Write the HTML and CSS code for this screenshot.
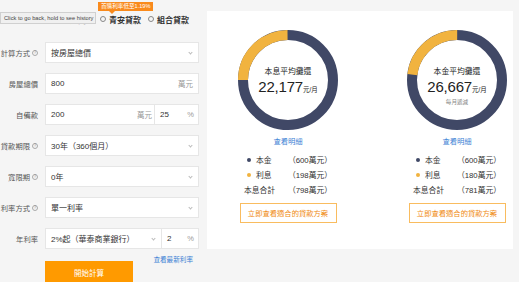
FILE: index.html
```html
<!DOCTYPE html>
<html lang="zh-Hant">
<head>
<meta charset="utf-8">
<link rel="stylesheet" href="styles.css">
</head>
<body>
<div class="page">
  <div class="form">
    <div class="radio-row">
      <div class="label">貸款類型 <span class="q">?</span></div>
      <div class="radios">
        <span class="radio checked"><i></i>一般房貸</span>
        <span class="radio promo"><i></i>青安貸款<span class="badge">首購利率低至1.19%</span></span>
        <span class="radio"><i></i>組合貸款</span>
      </div>
    </div>

    <div class="row">
      <div class="label">計算方式 <span class="q">?</span></div>
      <div class="field select"><span class="val">按房屋總價</span><span class="arrow"></span></div>
    </div>
    <div class="row">
      <div class="label">房屋總價</div>
      <div class="field"><span class="val">800</span><span class="unit">萬元</span></div>
    </div>
    <div class="row">
      <div class="label">自備款</div>
      <div class="field split">
        <div class="part main"><span class="val">200</span><span class="unit">萬元</span></div>
        <div class="part pct"><span class="val">25</span><span class="unit">%</span></div>
      </div>
    </div>
    <div class="row">
      <div class="label">貸款期限 <span class="q">?</span></div>
      <div class="field select"><span class="val">30年（360個月）</span><span class="arrow"></span></div>
    </div>
    <div class="row">
      <div class="label">寬限期 <span class="q">?</span></div>
      <div class="field select"><span class="val">0年</span><span class="arrow"></span></div>
    </div>
    <div class="row">
      <div class="label">利率方式 <span class="q">?</span></div>
      <div class="field select"><span class="val">單一利率</span><span class="arrow"></span></div>
    </div>
    <div class="row">
      <div class="label">年利率</div>
      <div class="field split">
        <div class="part main rate"><span class="val">2%起（華泰商業銀行）</span><span class="arrow"></span></div>
        <div class="part pct"><span class="val">2</span><span class="unit">%</span></div>
      </div>
    </div>
    <div class="link-row"><a class="link">查看最新利率</a></div>
    <div class="btn-row"><button class="calc">開始計算</button></div>
  </div>

  <div class="card">
    <div class="col">
      <div class="donut">
        <svg width="100" height="100" viewBox="0 0 100 100">
          <circle cx="50" cy="50" r="45" fill="none" stroke="#404866" stroke-width="10"/>
          <circle cx="50" cy="50" r="45" fill="none" stroke="#f1b33f" stroke-width="10" stroke-dasharray="70.1 282.74" transform="rotate(180 50 50)"/>
        </svg>
        <div class="center">
          <div class="ct">本息平均攤還</div>
          <div class="num">22,177<small>元/月</small></div>
        </div>
      </div>
      <a class="detail">查看明細</a>
      <div class="legend">
        <div class="lg"><span class="k"><i class="dot navy"></i>本金</span><span class="v">（600萬元）</span></div>
        <div class="lg"><span class="k"><i class="dot yellow"></i>利息</span><span class="v">（198萬元）</span></div>
        <div class="lg"><span class="k total">本息合計</span><span class="v">（798萬元）</span></div>
      </div>
      <button class="plan">立即查看適合的貸款方案</button>
    </div>
    <div class="col">
      <div class="donut">
        <svg width="100" height="100" viewBox="0 0 100 100">
          <circle cx="50" cy="50" r="45" fill="none" stroke="#404866" stroke-width="10"/>
          <circle cx="50" cy="50" r="45" fill="none" stroke="#f1b33f" stroke-width="10" stroke-dasharray="65.2 282.74" transform="rotate(187 50 50)"/>
        </svg>
        <div class="center">
          <div class="ct">本金平均攤還</div>
          <div class="num">26,667<small>元/月</small></div>
          <div class="sub">每月遞減</div>
        </div>
      </div>
      <a class="detail">查看明細</a>
      <div class="legend">
        <div class="lg"><span class="k"><i class="dot navy"></i>本金</span><span class="v">（600萬元）</span></div>
        <div class="lg"><span class="k"><i class="dot yellow"></i>利息</span><span class="v">（180萬元）</span></div>
        <div class="lg"><span class="k total">本息合計</span><span class="v">（781萬元）</span></div>
      </div>
      <button class="plan">立即查看適合的貸款方案</button>
    </div>
  </div>

  <div class="tooltip">Click to go back, hold to see history</div>
</div>
</body>
</html>
```

FILE: styles.css
```css
* { box-sizing: border-box; }
html, body { margin: 0; padding: 0; }
body {
  width: 519px;
  height: 282px;
  overflow: hidden;
  background: #f5f5f5;
  font-family: "Liberation Sans", "Noto Sans CJK TC", sans-serif;
  color: #333;
}
.page {
  position: relative;
  display: flex;
  align-items: flex-start;
  height: 282px;
}
.form {
  width: 207px;
  flex: none;
  padding-top: 13px;
}
.radio-row {
  display: flex;
  align-items: center;
  height: 12px;
  gap: 7px;
  margin-bottom: 17px;
}
.label {
  width: 38px;
  flex: none;
  white-space: nowrap;
  font-size: 7.3px;
  color: #555;
  display: flex;
  justify-content: flex-end;
  align-items: center;
  gap: 1px;
}
.q {
  display: inline-flex;
  align-items: center;
  justify-content: center;
  width: 6px;
  height: 6px;
  border: 0.7px solid #aaa;
  border-radius: 50%;
  font-size: 4.5px;
  color: #999;
  margin-left: 1px;
}
.radios {
  display: flex;
  align-items: center;
  gap: 7px;
  font-size: 8px;
  font-weight: bold;
  color: #333;
}
.radio {
  position: relative;
  display: inline-flex;
  align-items: center;
  gap: 3px;
  white-space: nowrap;
}
.radio.checked { margin-right: 7px; }
.radio i {
  width: 6px;
  height: 6px;
  border: 0.8px solid #888;
  border-radius: 50%;
  display: inline-block;
}
.radio.checked i { border-color: #4a7fd0; background: radial-gradient(circle, #4a7fd0 40%, #fff 45%); }
.badge {
  position: absolute;
  left: -2px;
  top: -12px;
  background: #f98a1c;
  color: #fff;
  font-size: 5.6px;
  font-weight: normal;
  padding: 1px 3px;
  line-height: 7px;
  white-space: nowrap;
}
.badge::after {
  content: "";
  position: absolute;
  left: 11px;
  bottom: -3px;
  border-left: 3px solid transparent;
  border-right: 3px solid transparent;
  border-top: 3px solid #f98a1c;
}
.row {
  display: flex;
  align-items: center;
  gap: 7px;
  height: 21px;
  margin-bottom: 10px;
}
.field {
  width: 154px;
  height: 21px;
  background: #fff;
  border: 1px solid #e6e6e6;
  display: flex;
  align-items: center;
  justify-content: space-between;
  padding: 0 5px;
  font-size: 8px;
  color: #333;
}
.unit { color: #999; font-size: 7.5px; }
.arrow {
  width: 3px;
  height: 3px;
  border-right: 0.6px solid #bbb;
  border-bottom: 0.6px solid #bbb;
  transform: rotate(45deg);
  margin-right: 1px;
  margin-top: -1px;
}
.field.split { padding: 0; }
.part {
  height: 100%;
  display: flex;
  align-items: center;
  justify-content: space-between;
  padding: 0 5px;
}
.part.main { width: 109px; border-right: 1px solid #e6e6e6; padding-right: 2px; }
.part.main.rate { width: 116px; padding-right: 5px; }
.part.pct { flex: 1; padding-right: 4px; }
.link-row {
  width: 193px;
  text-align: right;
  margin-top: -8px;
  height: 12px;
  line-height: 12px;
}
.link {
  font-size: 6.6px;
  color: #3b7fd4;
}
.btn-row { padding-left: 45px; margin-top: -2px; }
.calc {
  width: 88px;
  height: 22px;
  border: none;
  background: #ff9a00;
  color: #fff;
  font-family: inherit;
  font-size: 7.5px;
  padding: 0;
}
.card {
  margin-top: 11px;
  width: 306px;
  height: 238px;
  background: #fff;
  display: grid;
  grid-template-columns: 110px 110px;
  column-gap: 59px;
  padding-left: 26px;
  padding-top: 19px;
  flex: none;
}
.col {
  display: flex;
  flex-direction: column;
  align-items: center;
}
.donut {
  position: relative;
  width: 100px;
  height: 100px;
}
.donut svg { display: block; }
.center {
  position: absolute;
  left: 0;
  top: 0;
  width: 100px;
  padding-top: 36px;
  display: flex;
  flex-direction: column;
  align-items: center;
  color: #222;
}
.ct { font-size: 7.8px; line-height: 11px; }
.num {
  font-size: 15px;
  line-height: 16px;
  margin-top: 2px;
  letter-spacing: -0.2px;
}
.num small { font-size: 6.5px; letter-spacing: 0; }
.sub { font-size: 5.6px; line-height: 8px; color: #888; }
.detail {
  margin-top: 7px;
  font-size: 7.3px;
  line-height: 10px;
  color: #3b7fd4;
}
.legend {
  margin-top: 5px;
  display: flex;
  flex-direction: column;
}
.lg {
  display: flex;
  height: 15px;
  align-items: center;
  font-size: 7.8px;
  color: #333;
}
.k {
  width: 44px;
  display: inline-flex;
  align-items: center;
  padding-left: 3px;
}
.k.total { padding-left: 0; }
.dot {
  width: 4px;
  height: 4px;
  border-radius: 50%;
  display: inline-block;
  margin-right: 5px;
}
.dot.navy { background: #404866; }
.dot.yellow { background: #f1b33f; }
.plan {
  margin-top: 6px;
  width: 97px;
  height: 20px;
  background: #fff;
  border: 1px solid #f9bc5f;
  color: #f08a10;
  font-family: inherit;
  font-size: 7.3px;
  padding: 0;
  white-space: nowrap;
}
.tooltip {
  position: absolute;
  left: 0;
  top: 12px;
  width: 96px;
  height: 12px;
  background: #f0f0f0;
  border: 0.6px solid #d0d0d0;
  font-size: 5.7px;
  line-height: 11px;
  color: #444;
  padding-left: 3px;
  white-space: nowrap;
}
```
